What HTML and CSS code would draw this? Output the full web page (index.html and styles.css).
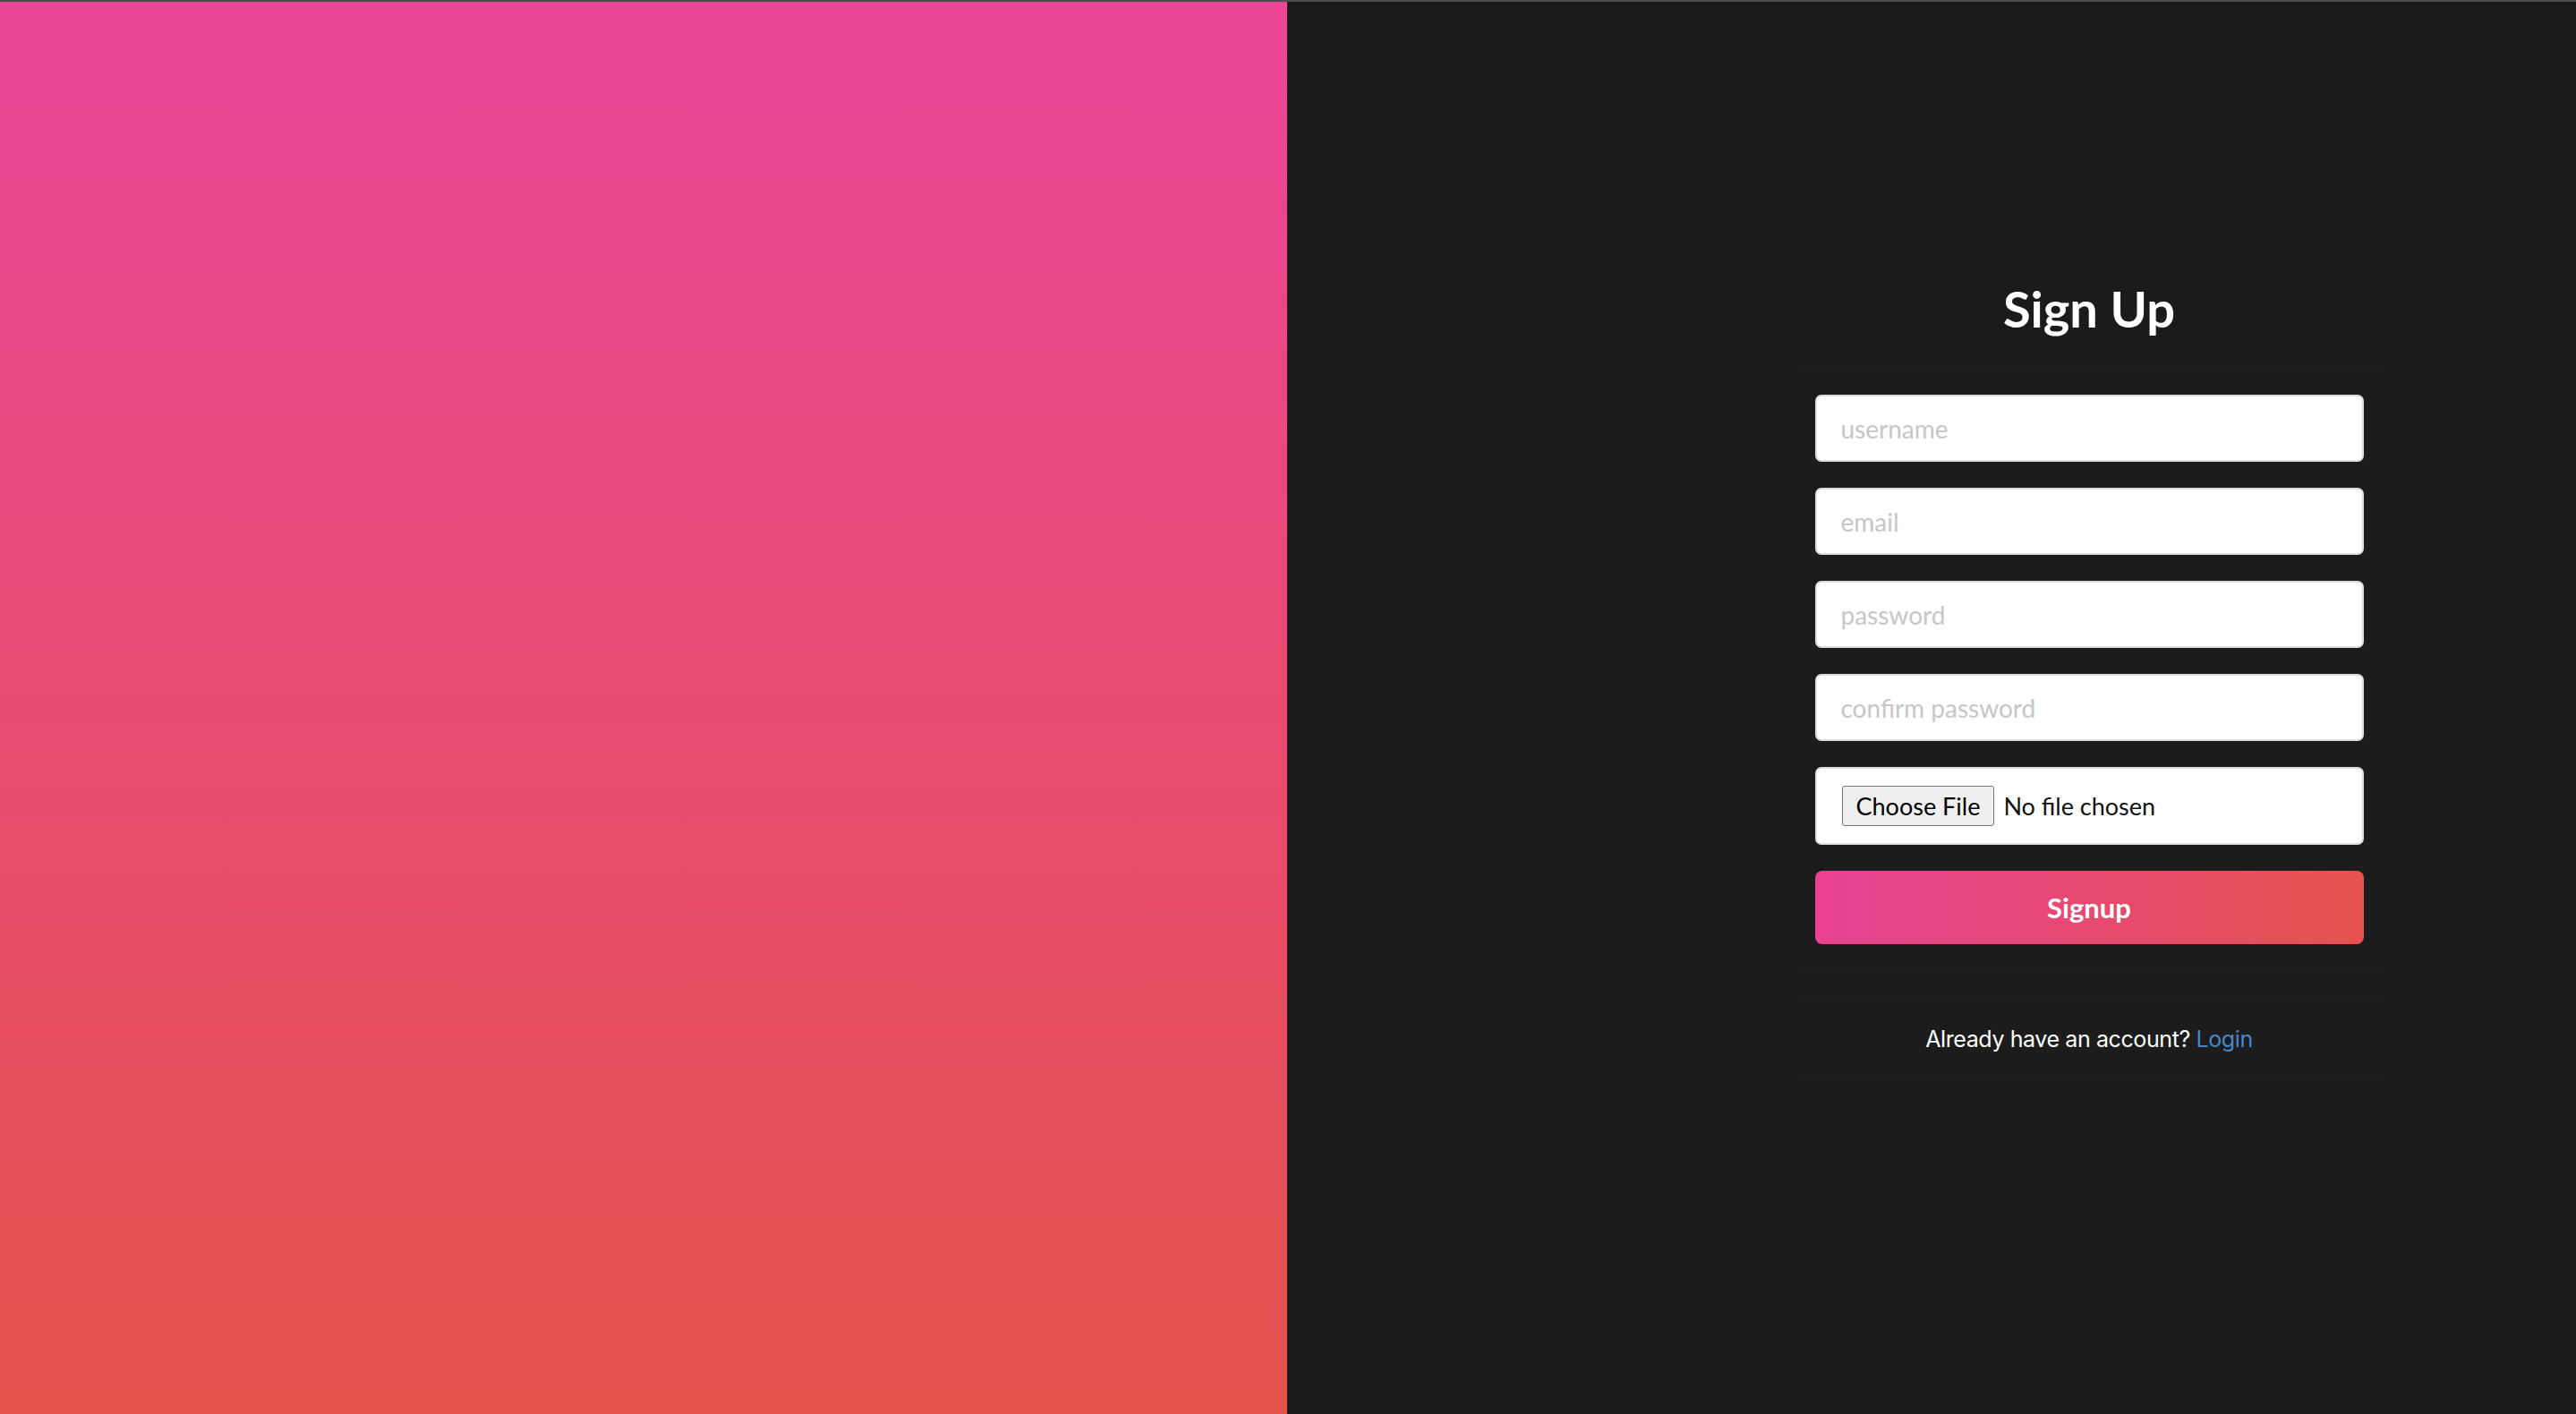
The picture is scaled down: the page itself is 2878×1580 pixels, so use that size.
FILE: index.html
```html
<!DOCTYPE html>
<html lang="en">
<head>
	<meta charset="UTF-8">
	<meta name="viewport" content="width=device-width, initial-scale=1.0">
	<title>Sign Up</title>
	<link rel="stylesheet" href="styles.css">
</head>
<body>

	<div class='side'></div>

	<div class='main'>
		<h1 class='title'>Sign Up</h1>

		<form class='card'>
			<input type='text' class='field' placeholder='username'>
			<input type='email' class='field' placeholder='email'>
			<input type='password' class='field' placeholder='password'>
			<input type='password' class='field' placeholder='confirm password'>
			<input type='file' class='file'>
			<button type='button' class='signup'>Signup</button>
		</form>

		<div class='card bottom'>
			<p>Already have an account? <a href='#'>Login</a></p>
		</div>
	</div>

</body>
</html>
```

FILE: styles.css
```css
		*{
		  box-sizing: border-box;
		  margin: 0px;
		  padding: 0px;
		}

		body{
			display: flex;
			height: 100vh;
			border-top: 2px solid #4b4b4b;
			background-color: #1b1b1b;
			font-family: Lato, "Open Sans", sans-serif;
		}

		.side{
			flex: 0 0 1438px;
			background: linear-gradient(to bottom, #ec4498, #e5534c);
		}

		.main{
			flex: 1;
			display: flex;
			flex-direction: column;
			align-items: center;
			padding: 309px 0 0 352px;
		}

		.title{
			font-size: 56px;
			line-height: 68px;
			font-weight: 700;
			color: white;
			margin-bottom: 33px;
		}

		.card{
			width: 673px;
			display: flex;
			flex-direction: column;
			gap: 29px;
			padding: 28px 29px 30px;
			border: 1px solid #1f1f1f;
			border-radius: 8px;
			background-color: #1c1c1c;
		}

		.field,
		.file{
			width: 100%;
			border: 2px solid #dedede;
			border-radius: 7px;
			background-color: white;
			font-family: inherit;
			font-size: 28px;
			color: #222;
		}

		.field{
			height: 75px;
			padding: 0 27px;
			outline: none;
		}

		.field::placeholder{
			color: #c6c6c6;
		}

		.file{
			height: 87px;
			padding: 0 28px;
			font-size: 27px;
			color: #111;
		}

		.file::file-selector-button{
			margin: 19px 10px 0 0;
			padding: 6px 15px;
			line-height: 31px;
			font-family: inherit;
			font-size: 27px;
			color: black;
			background-color: #efefef;
			border: 1px solid #767676;
			border-radius: 3px;
		}

		.signup{
			height: 82px;
			border: none;
			border-radius: 8px;
			background: linear-gradient(to right, #e94094, #e5534d);
			font-family: inherit;
			font-size: 31px;
			font-weight: 700;
			color: white;
			cursor: pointer;
		}

		.bottom{
			height: 94px;
			margin-top: 28px;
			align-items: center;
			justify-content: center;
			padding: 0;
		}

		.bottom p{
			font-family: Inter, Roboto, sans-serif;
			font-size: 25px;
			letter-spacing: -0.4px;
			color: white;
		}

		.bottom a{
			color: #4a86c7;
			text-decoration: none;
		}
```
